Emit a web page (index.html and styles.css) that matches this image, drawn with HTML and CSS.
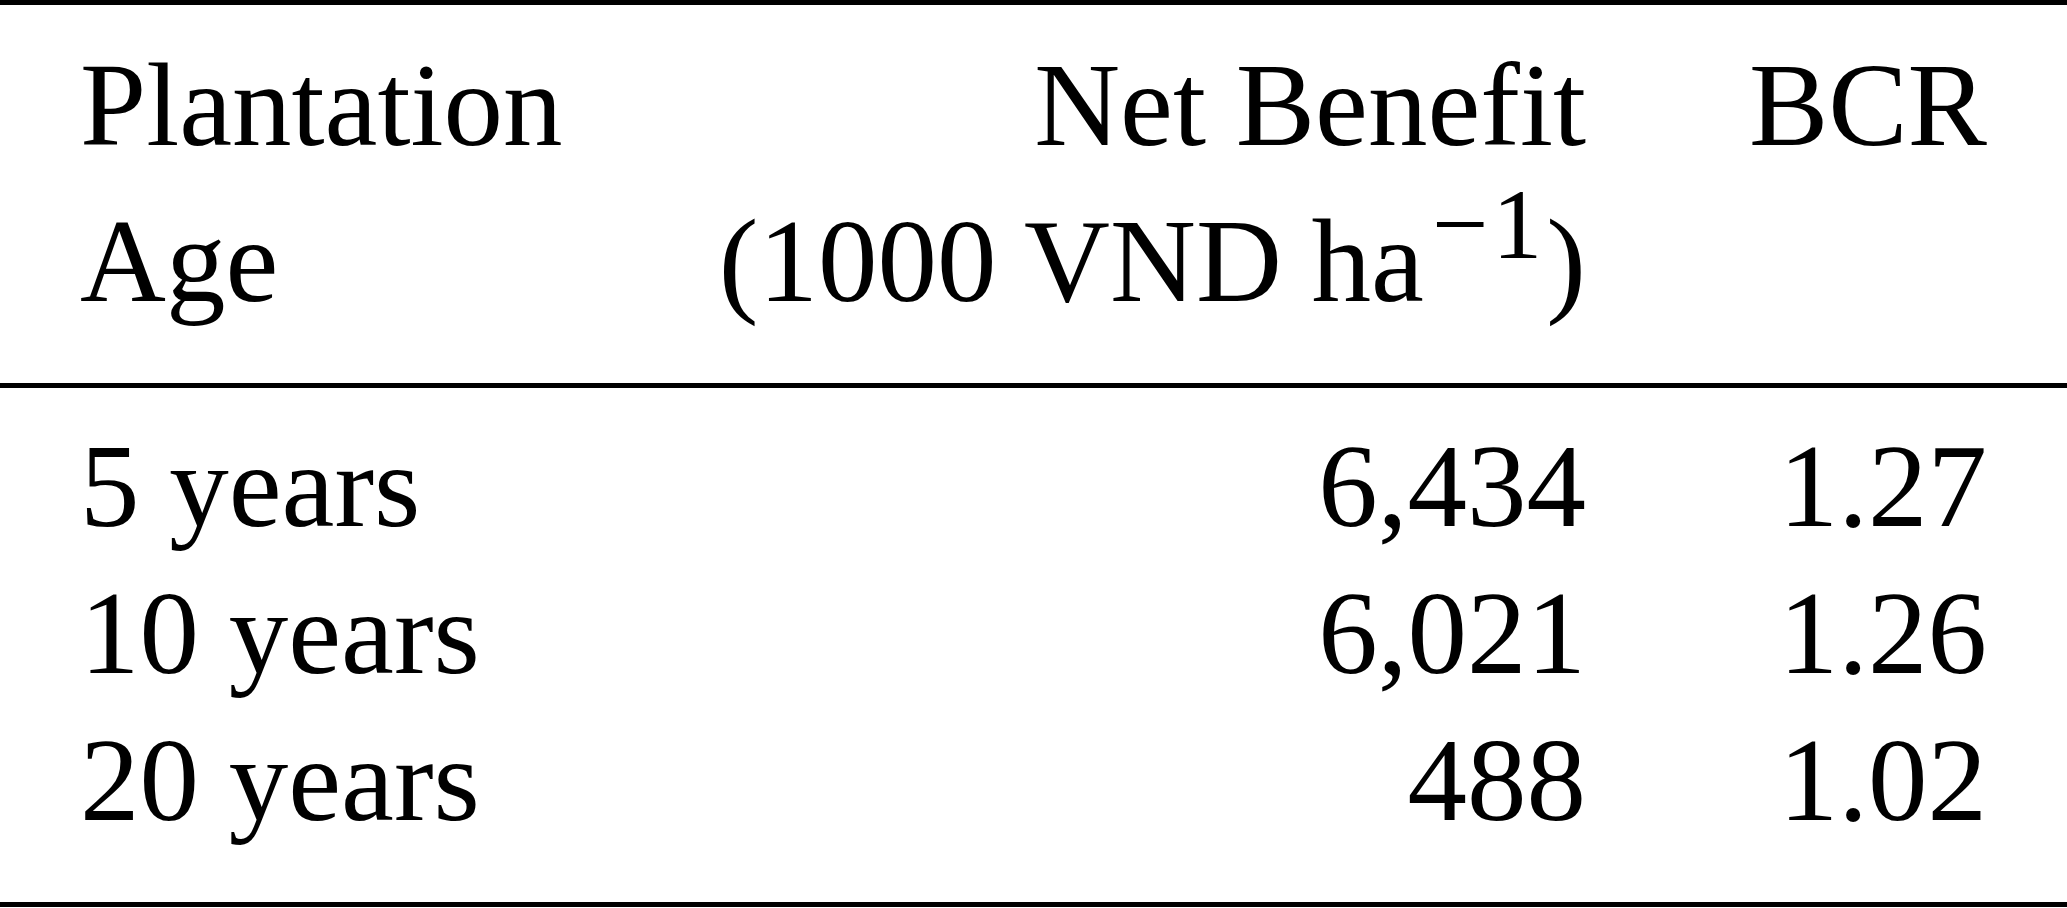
FILE: index.html
```html
<!DOCTYPE html>
<html lang="en">
<head>
    <meta charset="UTF-8">
    <meta name="viewport" content="width=device-width, initial-scale=1.0">
    <title>Plantation Age Net Benefit</title>
    <link rel="stylesheet" href="styles.css">
</head>
<body>
    <table class="benefit-table">
        <colgroup>
            <col class="col-age">
            <col class="col-benefit">
            <col class="col-bcr">
        </colgroup>
        <thead>
            <tr class="head-top">
                <th class="cell-left">Plantation</th>
                <th class="cell-right">Net Benefit</th>
                <th class="cell-right cell-last">BCR</th>
            </tr>
            <tr class="head-bottom">
                <th class="cell-left">Age</th>
                <th class="cell-right">(1000 VND ha<sup class="unit-power">−1</sup>)</th>
                <th class="cell-right cell-last"></th>
            </tr>
        </thead>
        <tbody>
            <tr class="row-first">
                <td class="cell-left">5 years</td>
                <td class="cell-right">6,434</td>
                <td class="cell-right cell-last">1.27</td>
            </tr>
            <tr>
                <td class="cell-left">10 years</td>
                <td class="cell-right">6,021</td>
                <td class="cell-right cell-last">1.26</td>
            </tr>
            <tr class="row-last">
                <td class="cell-left">20 years</td>
                <td class="cell-right">488</td>
                <td class="cell-right cell-last">1.02</td>
            </tr>
        </tbody>
    </table>
</body>
</html>
```

FILE: styles.css
```css
:root {
    --text-color: #000000;
    --rule-color: #000000;
    --background-color: #ffffff;
    --rule-width: 5px;
}

* {
    margin: 0;
    padding: 0;
    box-sizing: border-box;
}

body {
    font-family: "Liberation Serif", "Times New Roman", serif;
    font-size: 119px;
    color: var(--text-color);
    background-color: var(--background-color);
}

.benefit-table {
    width: 100%;
    table-layout: fixed;
    border-collapse: separate;
    border-spacing: 0;
}

.col-age {
    width: 680px;
}

.col-benefit {
    width: 906px;
}

.col-bcr {
    width: 481px;
}

th, td {
    font-weight: normal;
    white-space: nowrap;
    padding: 0;
}

.cell-left {
    text-align: left;
    padding-left: 80px;
}

.cell-right {
    text-align: right;
}

.cell-last {
    padding-right: 80px;
}

/* header: two lines between the top rule and the mid rule */
thead th {
    line-height: 156px;
}

.head-top th {
    border-top: var(--rule-width) solid var(--rule-color);
    padding-top: 22px;
}

.head-bottom th {
    border-bottom: var(--rule-width) solid var(--rule-color);
    padding-bottom: 44px;
}

.unit-power {
    font-size: 100px;
    line-height: 0;
    vertical-align: 43px;
    padding-left: 8px;
    letter-spacing: 4px;
}

tbody td {
    line-height: 147px;
}

.row-first td {
    padding-top: 25px;
}

.row-last td {
    border-bottom: var(--rule-width) solid var(--rule-color);
    padding-bottom: 48px;
}
```
